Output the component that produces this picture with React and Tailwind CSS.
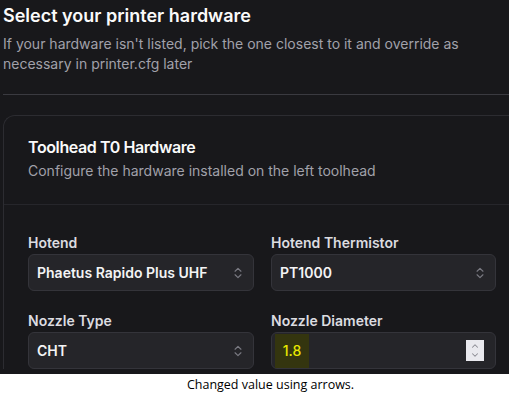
import { ChevronsUpDown, ChevronUp, ChevronDown } from 'lucide-react'

const FONT = { fontFamily: 'Inter, "Noto Sans", sans-serif' }

function SelectBox({ value }) {
  return (
    <div className="mt-[1px] h-[37px] rounded-md border border-[#34343a] bg-[#252529] flex items-center justify-between pl-2 pr-[8px]">
      <span className="text-[14px] font-semibold text-[#f4f4f5] leading-5">{value}</span>
      <ChevronsUpDown size={14} strokeWidth={2} className="text-[#7a7a82]" />
    </div>
  )
}

function Field({ label, children }) {
  return (
    <div>
      <div className="text-[14px] font-semibold leading-5 text-[#dcdce0]">{label}</div>
      {children}
    </div>
  )
}

export default function App() {
  return (
    <div className="w-[509px] h-[397px] overflow-hidden bg-white" style={FONT}>
      <div className="h-[374px] bg-[#18181b] pl-[3px] overflow-hidden">
        <h1 className="pt-[2px] text-[18px] font-semibold leading-7 text-[#fafafa]">
          Select your printer hardware
        </h1>
        <p className="mt-[4px] text-[14px] leading-5 text-[#a1a1aa] pr-4">
          If your hardware isn't listed, pick the one closest to it and override as necessary in printer.cfg later
        </p>
        <div className="mt-5 border-t border-[#3a3a40]" />
        <div className="mt-5 w-[540px] rounded-tl-xl border-l border-t border-[#2c2c31] bg-[#18181b]">
          <div className="px-6 pt-[19px] pb-[23px] border-b border-[#26262b]">
            <div className="text-[16px] font-semibold leading-6 tracking-tight text-[#fafafa]">Toolhead T0 Hardware</div>
            <div className="mt-[2px] text-[14px] leading-5 text-[#a1a1aa]">
              Configure the hardware installed on the left toolhead
            </div>
          </div>
          <div className="pl-6 pt-[28px] grid grid-cols-[226px_225px] gap-x-[17px] gap-y-5">
            <Field label="Hotend">
              <SelectBox value="Phaetus Rapido Plus UHF" />
            </Field>
            <Field label="Hotend Thermistor">
              <SelectBox value="PT1000" />
            </Field>
            <Field label="Nozzle Type">
              <SelectBox value="CHT" />
            </Field>
            <Field label="Nozzle Diameter">
              <div className="mt-[1px] h-[37px] rounded-md border border-[#34343a] bg-[#252529] flex items-center justify-between pl-[3px] pr-[11px]">
                <span className="h-[34px] w-[34px] bg-[#34350f] flex items-center justify-center text-[14px] font-medium text-[#e8e800]">
                  1.8
                </span>
                <span className="w-[18px] h-[21px] bg-[#e9e9ee] flex flex-col items-center justify-center">
                  <ChevronUp size={10} strokeWidth={2.5} className="text-[#8a8a92] -mb-[1px]" />
                  <ChevronDown size={10} strokeWidth={2.5} className="text-[#8a8a92]" />
                </span>
              </div>
            </Field>
          </div>
        </div>
      </div>
      <div
        className="h-[23px] flex items-center justify-center pl-[32px] text-[12.5px] text-black"
        style={{ fontFamily: '"Open Sans", "Noto Sans", sans-serif' }}
      >
        Changed value using arrows.
      </div>
    </div>
  )
}
